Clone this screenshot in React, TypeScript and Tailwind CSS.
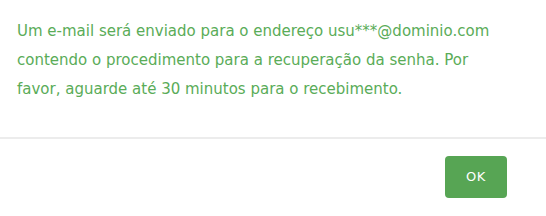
export default function App() {
  return (
    <div className="w-[546px] h-[216px] bg-white font-['DejaVu_Sans',sans-serif] flex flex-col">
      <div className="h-[137px] px-[17px] pt-[17px]">
        <p className="whitespace-nowrap text-[15px] leading-[29px] text-[#5aac58]">
          Um e-mail será enviado para o endereço usu***@dominio.com
          <br />
          contendo o procedimento para a recuperação da senha. Por
          <br />
          favor, aguarde até 30 minutos para o recebimento.
        </p>
      </div>
      <div className="h-[2px] bg-[#ececec]" />
      <div className="flex justify-end pr-[39px] pt-[17px]">
        <button className="w-[62px] h-[42px] rounded-[4px] bg-[#57a554] text-white text-[13px] tracking-[0.5px]">
          OK
        </button>
      </div>
    </div>
  );
}
